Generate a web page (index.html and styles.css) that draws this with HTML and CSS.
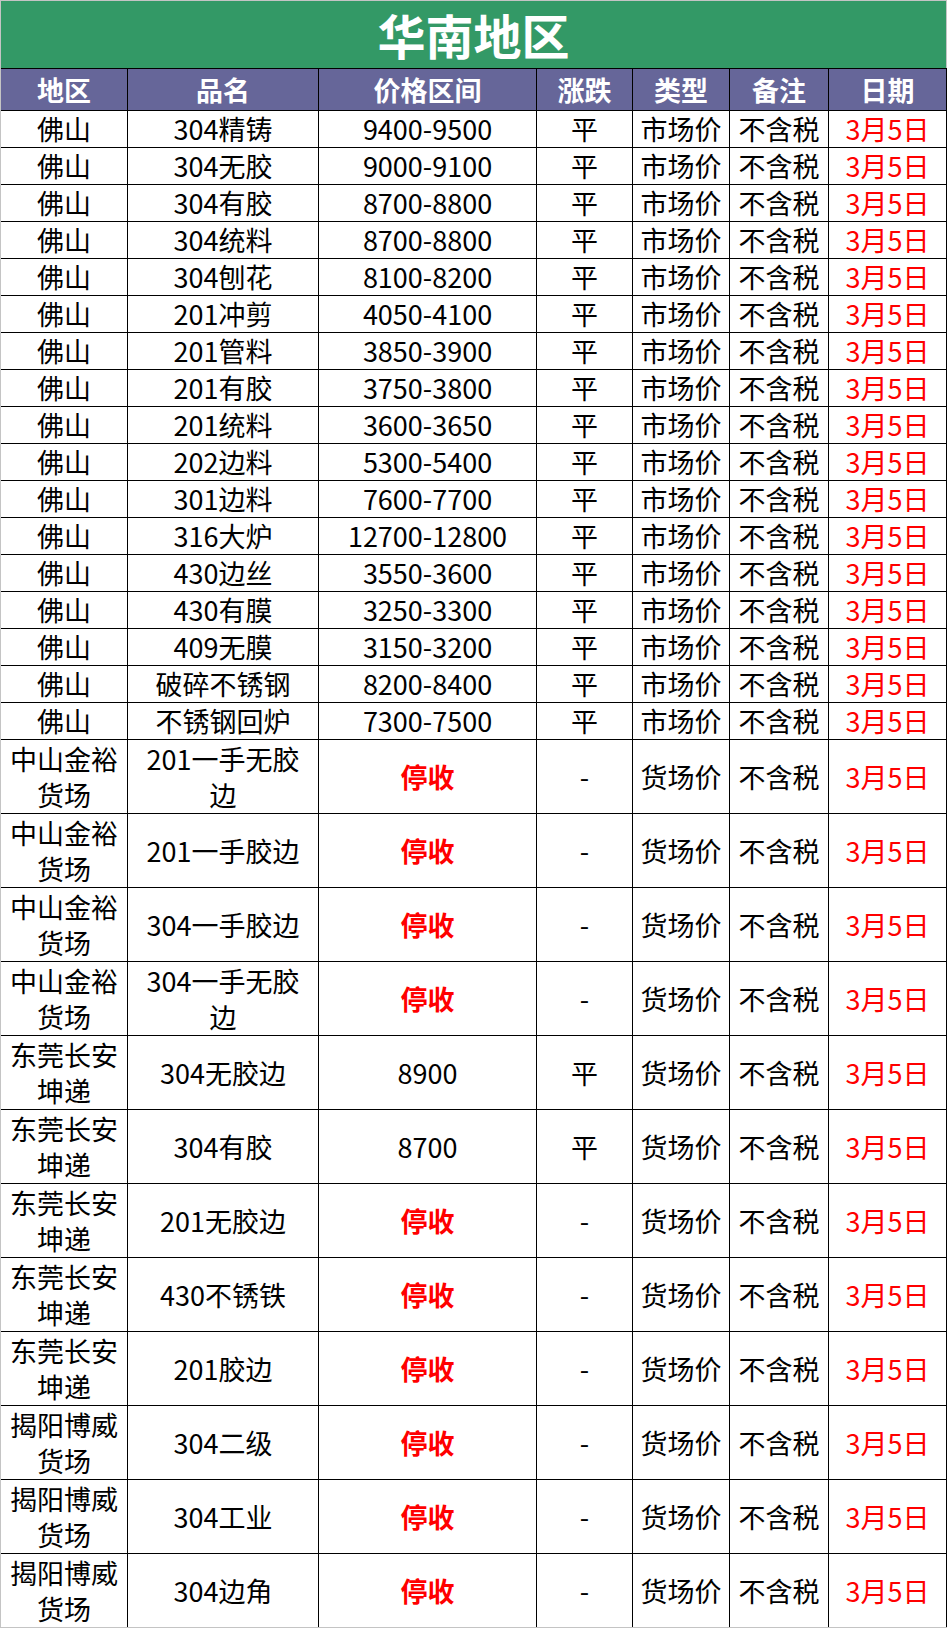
FILE: index.html
```html
<!DOCTYPE html>
<html lang="zh-CN">
<head>
<meta charset="utf-8">
<title>华南地区</title>
<link rel="stylesheet" href="styles.css">
</head>
<body>
<div class="sheet">
  <div class="title">华南地区</div>
  <div class="grid">
    <div class="row head">
      <div class="c">地区</div><div class="c">品名</div><div class="c">价格区间</div><div class="c">涨跌</div><div class="c">类型</div><div class="c">备注</div><div class="c">日期</div>
    </div>
    <div class="row"><div class="c">佛山</div><div class="c">304精铸</div><div class="c">9400-9500</div><div class="c">平</div><div class="c">市场价</div><div class="c">不含税</div><div class="c red">3月5日</div></div>
    <div class="row"><div class="c">佛山</div><div class="c">304无胶</div><div class="c">9000-9100</div><div class="c">平</div><div class="c">市场价</div><div class="c">不含税</div><div class="c red">3月5日</div></div>
    <div class="row"><div class="c">佛山</div><div class="c">304有胶</div><div class="c">8700-8800</div><div class="c">平</div><div class="c">市场价</div><div class="c">不含税</div><div class="c red">3月5日</div></div>
    <div class="row"><div class="c">佛山</div><div class="c">304统料</div><div class="c">8700-8800</div><div class="c">平</div><div class="c">市场价</div><div class="c">不含税</div><div class="c red">3月5日</div></div>
    <div class="row"><div class="c">佛山</div><div class="c">304刨花</div><div class="c">8100-8200</div><div class="c">平</div><div class="c">市场价</div><div class="c">不含税</div><div class="c red">3月5日</div></div>
    <div class="row"><div class="c">佛山</div><div class="c">201冲剪</div><div class="c">4050-4100</div><div class="c">平</div><div class="c">市场价</div><div class="c">不含税</div><div class="c red">3月5日</div></div>
    <div class="row"><div class="c">佛山</div><div class="c">201管料</div><div class="c">3850-3900</div><div class="c">平</div><div class="c">市场价</div><div class="c">不含税</div><div class="c red">3月5日</div></div>
    <div class="row"><div class="c">佛山</div><div class="c">201有胶</div><div class="c">3750-3800</div><div class="c">平</div><div class="c">市场价</div><div class="c">不含税</div><div class="c red">3月5日</div></div>
    <div class="row"><div class="c">佛山</div><div class="c">201统料</div><div class="c">3600-3650</div><div class="c">平</div><div class="c">市场价</div><div class="c">不含税</div><div class="c red">3月5日</div></div>
    <div class="row"><div class="c">佛山</div><div class="c">202边料</div><div class="c">5300-5400</div><div class="c">平</div><div class="c">市场价</div><div class="c">不含税</div><div class="c red">3月5日</div></div>
    <div class="row"><div class="c">佛山</div><div class="c">301边料</div><div class="c">7600-7700</div><div class="c">平</div><div class="c">市场价</div><div class="c">不含税</div><div class="c red">3月5日</div></div>
    <div class="row"><div class="c">佛山</div><div class="c">316大炉</div><div class="c">12700-12800</div><div class="c">平</div><div class="c">市场价</div><div class="c">不含税</div><div class="c red">3月5日</div></div>
    <div class="row"><div class="c">佛山</div><div class="c">430边丝</div><div class="c">3550-3600</div><div class="c">平</div><div class="c">市场价</div><div class="c">不含税</div><div class="c red">3月5日</div></div>
    <div class="row"><div class="c">佛山</div><div class="c">430有膜</div><div class="c">3250-3300</div><div class="c">平</div><div class="c">市场价</div><div class="c">不含税</div><div class="c red">3月5日</div></div>
    <div class="row"><div class="c">佛山</div><div class="c">409无膜</div><div class="c">3150-3200</div><div class="c">平</div><div class="c">市场价</div><div class="c">不含税</div><div class="c red">3月5日</div></div>
    <div class="row"><div class="c">佛山</div><div class="c">破碎不锈钢</div><div class="c">8200-8400</div><div class="c">平</div><div class="c">市场价</div><div class="c">不含税</div><div class="c red">3月5日</div></div>
    <div class="row"><div class="c">佛山</div><div class="c">不锈钢回炉</div><div class="c">7300-7500</div><div class="c">平</div><div class="c">市场价</div><div class="c">不含税</div><div class="c red">3月5日</div></div>

    <div class="row tall"><div class="c">中山金裕<br>货场</div><div class="c">201一手无胶<br>边</div><div class="c stop">停收</div><div class="c">-</div><div class="c">货场价</div><div class="c">不含税</div><div class="c red">3月5日</div></div>
    <div class="row tall"><div class="c">中山金裕<br>货场</div><div class="c">201一手胶边</div><div class="c stop">停收</div><div class="c">-</div><div class="c">货场价</div><div class="c">不含税</div><div class="c red">3月5日</div></div>
    <div class="row tall"><div class="c">中山金裕<br>货场</div><div class="c">304一手胶边</div><div class="c stop">停收</div><div class="c">-</div><div class="c">货场价</div><div class="c">不含税</div><div class="c red">3月5日</div></div>
    <div class="row tall"><div class="c">中山金裕<br>货场</div><div class="c">304一手无胶<br>边</div><div class="c stop">停收</div><div class="c">-</div><div class="c">货场价</div><div class="c">不含税</div><div class="c red">3月5日</div></div>
    <div class="row tall"><div class="c">东莞长安<br>坤递</div><div class="c">304无胶边</div><div class="c">8900</div><div class="c">平</div><div class="c">货场价</div><div class="c">不含税</div><div class="c red">3月5日</div></div>
    <div class="row tall"><div class="c">东莞长安<br>坤递</div><div class="c">304有胶</div><div class="c">8700</div><div class="c">平</div><div class="c">货场价</div><div class="c">不含税</div><div class="c red">3月5日</div></div>
    <div class="row tall"><div class="c">东莞长安<br>坤递</div><div class="c">201无胶边</div><div class="c stop">停收</div><div class="c">-</div><div class="c">货场价</div><div class="c">不含税</div><div class="c red">3月5日</div></div>
    <div class="row tall"><div class="c">东莞长安<br>坤递</div><div class="c">430不锈铁</div><div class="c stop">停收</div><div class="c">-</div><div class="c">货场价</div><div class="c">不含税</div><div class="c red">3月5日</div></div>
    <div class="row tall"><div class="c">东莞长安<br>坤递</div><div class="c">201胶边</div><div class="c stop">停收</div><div class="c">-</div><div class="c">货场价</div><div class="c">不含税</div><div class="c red">3月5日</div></div>
    <div class="row tall"><div class="c">揭阳博威<br>货场</div><div class="c">304二级</div><div class="c stop">停收</div><div class="c">-</div><div class="c">货场价</div><div class="c">不含税</div><div class="c red">3月5日</div></div>
    <div class="row tall"><div class="c">揭阳博威<br>货场</div><div class="c">304工业</div><div class="c stop">停收</div><div class="c">-</div><div class="c">货场价</div><div class="c">不含税</div><div class="c red">3月5日</div></div>
    <div class="row tall"><div class="c">揭阳博威<br>货场</div><div class="c">304边角</div><div class="c stop">停收</div><div class="c">-</div><div class="c">货场价</div><div class="c">不含税</div><div class="c red">3月5日</div></div>
  </div>
</div>
</body>
</html>
```

FILE: styles.css
```css
html, body {
  margin: 0;
  padding: 0;
  background: #c4c4c4;
}
body {
  font-family: "Noto Sans CJK SC", "Noto Sans", sans-serif;
  color: #000;
}
.sheet {
  padding: 1px 0 0 1px;
  width: 946px;
}
.title {
  height: 67px;
  width: 945px;
  background: #339966;
  color: #fff;
  font-weight: bold;
  font-size: 48px;
  line-height: 67px;
  text-align: center;
}
.grid {
  background: #000;
  display: flex;
  flex-direction: column;
  gap: 1px;
  padding: 1px 1px 0 0;
  width: 945px;
}
.row {
  display: grid;
  grid-template-columns: 126px 190px 217px 95px 96px 98px 117px;
  column-gap: 1px;
  height: 36px;
}
.row.head {
  height: 41px;
}
.row.tall {
  height: 73px;
}
.c {
  background: #fff;
  display: flex;
  align-items: center;
  justify-content: center;
  text-align: center;
  font-size: 27px;
  line-height: 36px;
  white-space: nowrap;
}
.head .c {
  background: #666699;
  color: #fff;
  font-weight: bold;
  font-size: 27px;
}
.red {
  color: #ff0000;
}
.stop {
  color: #ff0000;
  font-weight: bold;
}
```
